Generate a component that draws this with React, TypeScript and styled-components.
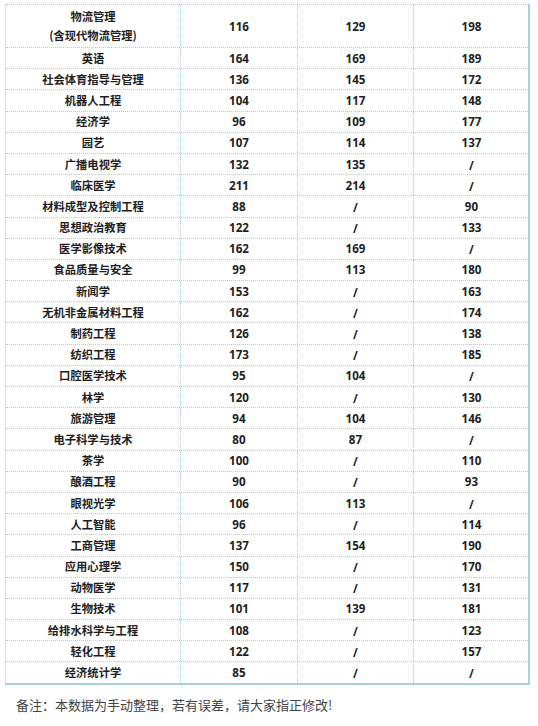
import React from "react";
import styled, { createGlobalStyle } from "styled-components";

const GlobalStyle = createGlobalStyle`
  html, body {
    margin: 0;
    padding: 0;
    background: #ffffff;
  }
  body {
    font-family: "Noto Sans CJK SC", "Noto Sans", sans-serif;
  }
`;

const LINE = "#a3d3d9";

const Page = styled.div`
  width: 538px;
  height: 726px;
  padding: 4px 0 0 5px;
  box-sizing: border-box;
  overflow: hidden;
`;

const Table = styled.div`
  width: 525px;
  box-sizing: border-box;
  border-left: 1px solid #c6e6ea;
  border-right: 2px solid ${LINE};
  border-bottom: 2px solid ${LINE};
  display: flex;
  flex-direction: column;
`;

const Row = styled.div<{ $tall?: boolean }>`
  display: grid;
  grid-template-columns: 174px 117px 116px 116px;
  height: ${(p) => (p.$tall ? "43px" : "21.2px")};
  box-sizing: border-box;
  border-top: 1px dotted ${LINE};
`;

const Cell = styled.div<{ $first?: boolean }>`
  display: flex;
  align-items: center;
  justify-content: center;
  text-align: center;
  border-left: ${(p) => (p.$first ? "none" : `1px dotted ${LINE}`)};
  font-family: "Noto Sans CJK SC", "Noto Sans", sans-serif;
  font-weight: 700;
  color: #1e1e1e;
  font-size: 11.3px;
  line-height: 19px;
  white-space: pre-line;
`;

const Num = styled.span<{ $slash?: boolean }>`
  font-family: "Open Sans", "Noto Sans", sans-serif;
  font-weight: 700;
  font-size: 11.6px;
  position: relative;
  top: ${(p) => (p.$slash ? "1px" : "0")};
`;

const Note = styled.div`
  margin-top: 11px;
  padding-left: 11px;
  font-family: "Noto Sans CJK SC", "Noto Sans", sans-serif;
  font-size: 13px;
  line-height: 18px;
  color: #444444;
`;

const rows: [string, string, string, string][] = [
  ["物流管理\n(含现代物流管理)", "116", "129", "198"],
  ["英语", "164", "169", "189"],
  ["社会体育指导与管理", "136", "145", "172"],
  ["机器人工程", "104", "117", "148"],
  ["经济学", "96", "109", "177"],
  ["园艺", "107", "114", "137"],
  ["广播电视学", "132", "135", "/"],
  ["临床医学", "211", "214", "/"],
  ["材料成型及控制工程", "88", "/", "90"],
  ["思想政治教育", "122", "/", "133"],
  ["医学影像技术", "162", "169", "/"],
  ["食品质量与安全", "99", "113", "180"],
  ["新闻学", "153", "/", "163"],
  ["无机非金属材料工程", "162", "/", "174"],
  ["制药工程", "126", "/", "138"],
  ["纺织工程", "173", "/", "185"],
  ["口腔医学技术", "95", "104", "/"],
  ["林学", "120", "/", "130"],
  ["旅游管理", "94", "104", "146"],
  ["电子科学与技术", "80", "87", "/"],
  ["茶学", "100", "/", "110"],
  ["酿酒工程", "90", "/", "93"],
  ["眼视光学", "106", "113", "/"],
  ["人工智能", "96", "/", "114"],
  ["工商管理", "137", "154", "190"],
  ["应用心理学", "150", "/", "170"],
  ["动物医学", "117", "/", "131"],
  ["生物技术", "101", "139", "181"],
  ["给排水科学与工程", "108", "/", "123"],
  ["轻化工程", "122", "/", "157"],
  ["经济统计学", "85", "/", "/"],
];

export default function App() {
  return (
    <>
      <GlobalStyle />
      <Page>
        <Table>
          {rows.map((r, i) => (
            <Row key={i} $tall={i === 0}>
              <Cell $first>{r[0]}</Cell>
              {r.slice(1).map((v, j) => (
                <Cell key={j}>
                  <Num $slash={v === "/"}>{v}</Num>
                </Cell>
              ))}
            </Row>
          ))}
        </Table>
        <Note>备注：本数据为手动整理，若有误差，请大家指正修改!</Note>
      </Page>
    </>
  );
}
